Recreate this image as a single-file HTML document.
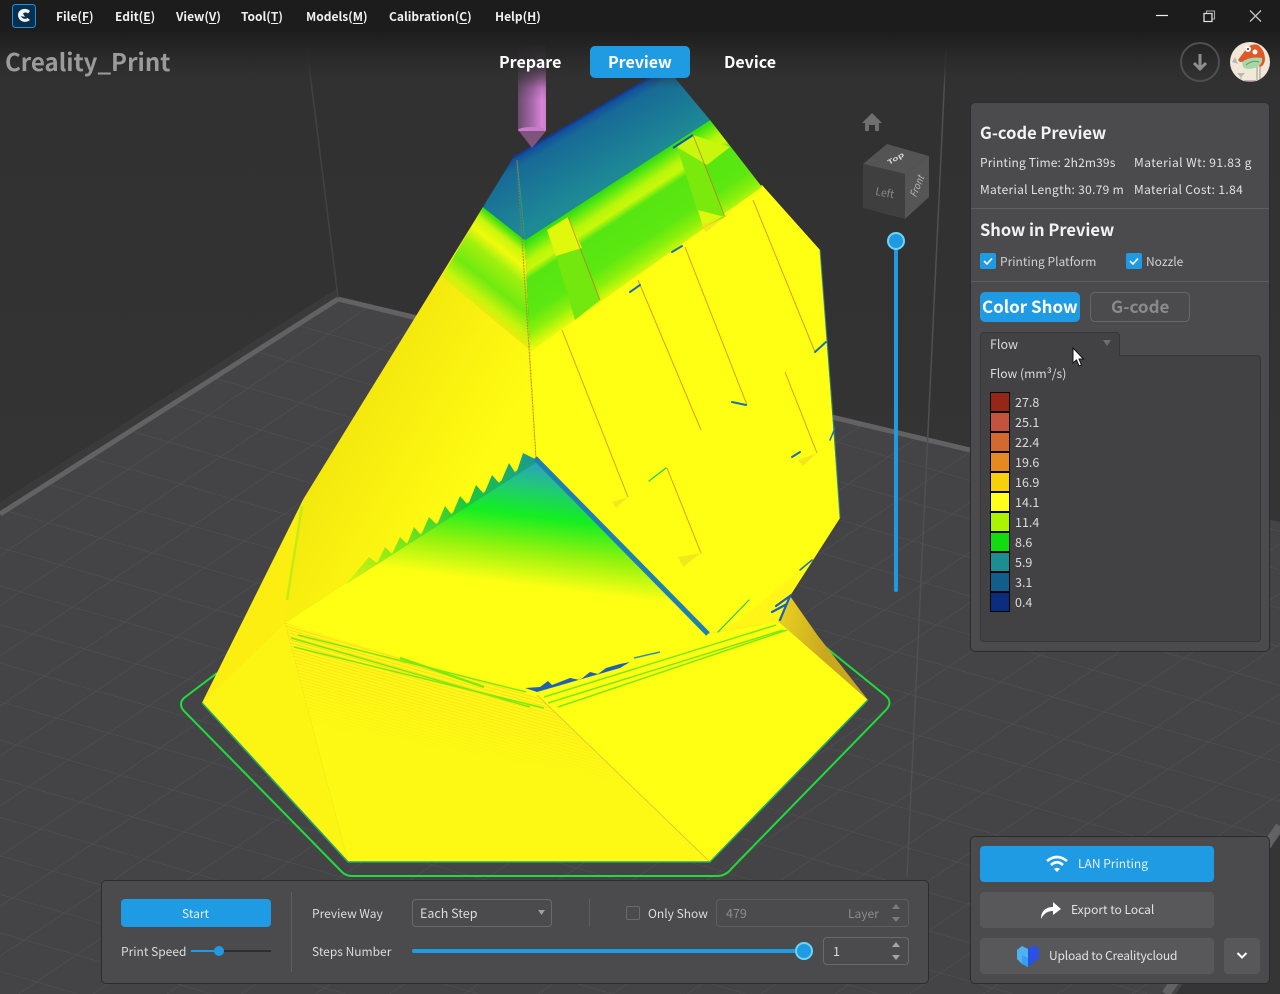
<!DOCTYPE html>
<html lang="en"><head><meta charset="utf-8"><title>Creality Print</title>
<style>
html,body{margin:0;padding:0;background:#444}
body{width:1280px;height:994px;position:relative;overflow:hidden;font-family:"Liberation Sans","Noto Sans CJK SC",sans-serif}
.t,.t *{font-family:"Noto Sans CJK SC","Liberation Sans",sans-serif}
.t{position:absolute;white-space:nowrap;color:#e2e2e2;font-size:12px;line-height:18px}
.b{position:absolute;box-sizing:border-box}
.m{font-size:12px;font-weight:700;color:#f0f0f0;top:8px}
.m u{text-underline-offset:2px;font-weight:700}
.h{font-size:16.5px;font-weight:700;color:#f2f2f2;line-height:22px}
.tb{font-size:16px;line-height:24px;font-weight:700;color:#fff;top:49px}
.sw{position:absolute;left:990px;width:20px;height:20px;box-sizing:border-box;border:1px solid #050505}
.l{left:1015px;color:#dcdcdc;font-size:12.5px}
svg{position:absolute}
</style></head><body>

<svg style="left:0;top:0" width="1280" height="994" viewBox="0 0 1280 994">
<defs>
<linearGradient id="wall" x1="0" y1="0" x2="0" y2="1"><stop offset="0" stop-color="#303030"/><stop offset="1" stop-color="#383838"/></linearGradient>
<pattern id="grid" patternUnits="userSpaceOnUse" width="100" height="100" patternTransform="matrix(.52 .15 .40 -.27 48 523)">
<path d="M0 0H100M0 0V100" stroke="#555557" stroke-width="2" fill="none"/></pattern>
<linearGradient id="top" x1="0" y1="0" x2="0" y2="1"><stop offset="0" stop-color="#1c1c1c"/><stop offset=".36" stop-color="#1d1d1d"/><stop offset=".75" stop-color="#2c2c2c" stop-opacity=".8"/><stop offset="1" stop-color="#333" stop-opacity="0"/></linearGradient>
<linearGradient id="noz" x1="0" y1="0" x2="1" y2="0"><stop offset="0" stop-color="#6a4a6c"/><stop offset=".5" stop-color="#a468a8"/><stop offset=".85" stop-color="#d884d8"/><stop offset="1" stop-color="#cf7dcf"/></linearGradient>
<linearGradient id="nozf" x1="0" y1="0" x2="0" y2="1"><stop offset="0" stop-color="#2c2c2c" stop-opacity=".8"/><stop offset="1" stop-color="#2c2c2c" stop-opacity="0"/></linearGradient>
<linearGradient id="roof" gradientUnits="userSpaceOnUse" x1="585" y1="115" x2="620" y2="175"><stop offset="0" stop-color="#12489c"/><stop offset=".16" stop-color="#176a96"/><stop offset="1" stop-color="#1e8a96"/></linearGradient>
<linearGradient id="band" gradientUnits="userSpaceOnUse" x1="615" y1="178" x2="668" y2="259"><stop offset="0" stop-color="#1cd418"/><stop offset=".1" stop-color="#58e810"/><stop offset=".22" stop-color="#b8f60a"/><stop offset=".3" stop-color="#c8f80a"/><stop offset=".38" stop-color="#56e612"/><stop offset=".7" stop-color="#5ce810"/><stop offset=".85" stop-color="#8cf00c"/><stop offset="1" stop-color="#e4fa0a"/></linearGradient>
<linearGradient id="band2" gradientUnits="userSpaceOnUse" x1="505" y1="225" x2="452" y2="292"><stop offset="0" stop-color="#30dc12"/><stop offset=".12" stop-color="#c8f60c"/><stop offset=".25" stop-color="#f0fb0c"/><stop offset=".4" stop-color="#a0f00e"/><stop offset=".65" stop-color="#70ea0f"/><stop offset=".85" stop-color="#c8f40c"/><stop offset="1" stop-color="#f4e80e"/></linearGradient>
<linearGradient id="tri" gradientUnits="userSpaceOnUse" x1="575" y1="470" x2="560" y2="590"><stop offset="0" stop-color="#2aa5b8"/><stop offset=".2" stop-color="#20cc70"/><stop offset=".42" stop-color="#14ee20"/><stop offset=".7" stop-color="#90f20e"/><stop offset="1" stop-color="#ffff14"/></linearGradient>
<linearGradient id="saw" gradientUnits="userSpaceOnUse" x1="535" y1="458" x2="340" y2="590"><stop offset="0" stop-color="#1a9a8e"/><stop offset=".35" stop-color="#1cc83c"/><stop offset=".7" stop-color="#84e818"/><stop offset="1" stop-color="#e4f410"/></linearGradient>
<linearGradient id="lft" gradientUnits="userSpaceOnUse" x1="330" y1="450" x2="450" y2="520"><stop offset="0" stop-color="#f4e80e"/><stop offset="1" stop-color="#fffb12"/></linearGradient>
<linearGradient id="gold" gradientUnits="userSpaceOnUse" x1="780" y1="620" x2="830" y2="630"><stop offset="0" stop-color="#e8cf20"/><stop offset="1" stop-color="#c9a820"/></linearGradient>
<pattern id="hatch" patternUnits="userSpaceOnUse" width="3" height="3" patternTransform="rotate(16)"><path d="M0 1H3" stroke="#f0773c" stroke-width="1" opacity=".22"/></pattern>
<linearGradient id="fade" gradientUnits="userSpaceOnUse" x1="420" y1="665" x2="405" y2="745"><stop offset="0" stop-color="#fff" stop-opacity="1"/><stop offset="1" stop-color="#fff" stop-opacity="0"/></linearGradient>
<mask id="fm" maskUnits="userSpaceOnUse" x="200" y="600" width="600" height="280"><rect x="200" y="600" width="600" height="280" fill="url(#fade)"/></mask>
</defs>

<!-- room -->
<rect width="1280" height="994" fill="url(#wall)"/>
<polygon points="338,298 1280,522 1280,994 0,994 0,513" fill="#444446"/>
<polygon points="338,298 1280,522 1280,994 0,994 0,513" fill="url(#grid)"/>
<polygon points="0,502 338,288 338,298 0,513" fill="#3a3a3a"/>
<path d="M0 514L338 299L970 450" stroke="#626262" stroke-width="5" fill="none"/>
<path d="M305 33L338 298" stroke="#424242" stroke-width="1.5" fill="none"/>
<path d="M946 50L907 877" stroke="#505052" stroke-width="1.5" fill="none"/>
<polygon points="1280,830 1280,994 1176,994" fill="#353535"/>
<path d="M1280 826L1166 994" stroke="#626262" stroke-width="9" fill="none"/>

<!-- skirt outline -->
<path d="M217 673L184 698Q178 704 184 711L342 872Q346 876 352 876L717 876Q726 876 732 868L886 710Q893 702 886 696L813 637" stroke="#1fdc3c" stroke-width="2" fill="none"/>

<!-- model base faces -->
<polygon points="202,703 304,498 483,207 530,350 536,458 285,623 348,862" fill="url(#lft)"/>
<polygon points="304,498 285,623 202,703" fill="#fbee10"/>
<polygon points="202,703 285,623 348,862" fill="#fcf412"/>
<path d="M302 506L287 600" stroke="#a4e818" stroke-width="2.5" opacity=".6" fill="none"/>
<polygon points="285,623 534,692 710,862 348,862" fill="#fdf814"/>
<polygon points="285,623 534,692 640,800 348,862" fill="url(#hatch)" mask="url(#fm)"/>
<polygon points="534,692 777,620 868,700 710,862" fill="#ffff14"/>
<path d="M534 692L710 862" stroke="#e7b33c" stroke-width="1" fill="none" opacity=".7"/>
<polygon points="790,596 777,620 868,700 818,636" fill="url(#gold)"/>
<path d="M202 703L348 862H710L868 700" stroke="#1fa66c" stroke-width="1.6" fill="none"/>

<!-- lower triangle -->
<polygon points="536,458 708,634 777,622 534,696 285,623" fill="#ffff14"/>
<polygon points="536,458 708,634 285,623" fill="url(#tri)"/>
<polygon points="537,460 523,453 516,474 509,463 500,484 492,475 484,494 476,485 468,505 460,496 452,515 445,506 437,525 429,517 421,535 414,527 407,544 400,537 392,554 385,547 377,563 369,557 345,585 537,462" fill="url(#saw)"/>

<!-- upper right face -->
<polygon points="530,350 762,185 820,250 840,518 790,596 777,622 708,634 536,458" fill="#ffff14"/>
<polygon points="708,634 777,622 790,596 800,570 740,620" fill="#fff218" opacity=".8"/>
<path d="M820 250L834 430L840 518" stroke="#2a8ea0" stroke-width="1.2" fill="none" opacity=".7"/>
<path d="M535 458L708 634" stroke="#1f7fb0" stroke-width="5" fill="none"/>

<!-- roof and bands -->
<polygon points="483,207 525,240 530,350 442,277" fill="url(#band2)"/>
<polygon points="525,240 710,120 762,187 530,352" fill="url(#band)"/>
<polygon points="513,158 650,78 675,78 710,120 525,240 483,207" fill="url(#roof)"/>
<path d="M513 158L650 78" stroke="#0e3f9c" stroke-width="2" fill="none"/>
<path d="M517 160L525 240" stroke="#1fa07e" stroke-width="1" fill="none"/>
<!-- pillars -->
<polygon points="677,147 693,135 725,217 703,228" fill="#7aea0c"/>
<polygon points="677,147 693,135 730,147 707,165" fill="#c8f60c"/>
<polygon points="698,210 725,217 730,212 703,228" fill="#dcf80c"/>
<path d="M673 148L693 135" stroke="#1656a8" stroke-width="2"/>
<polygon points="547,230 568,217 600,300 575,320 555,252" fill="#72e80e"/>
<polygon points="547,230 568,217 582,248 556,256" fill="#e0f80c"/>
<!-- red seams -->
<g stroke="#c8582c" stroke-width="1" fill="none" opacity=".6">
<path d="M693 135L725 217"/><path d="M568 217L600 300"/><path d="M753 200L815 352"/><path d="M685 247L747 405"/><path d="M638 280L701 430"/><path d="M562 330L628 497"/><path d="M667 468L701 553"/><path d="M785 372L817 453"/>
</g>
<path d="M517 160L536 458" stroke="#c86034" stroke-width="1" fill="none" stroke-dasharray="2 1" opacity=".8"/>
<g fill="#ecd81e" opacity=".6"><polygon points="628,497 612,502 616,508"/><polygon points="701,553 678,557 683,567"/><polygon points="817,453 798,460 803,466"/><polygon points="725,217 700,226 706,232"/></g>
<!-- small marks -->
<g fill="none" stroke-linecap="round">
<path d="M672 252L682 246M630 292L640 285M732 402L746 405M815 352L826 342M792 457L800 452" stroke="#1a6fb0" stroke-width="2"/>
<path d="M666 468L649 481M749 600L718 632" stroke="#20c860" stroke-width="1.2"/>
<path d="M776 606L790 596L780 620M772 612L787 604" stroke="#1c62b4" stroke-width="2.2"/>
<path d="M800 570L812 560M830 440L835 428" stroke="#1c72b4" stroke-width="1.5"/>
</g>
<!-- fold stripes -->
<g stroke="#7cea12" fill="none" stroke-width="1.5">
<path d="M298 635L526 692"/><path d="M291 638L530 707"/><path d="M294 647L544 708"/>
<path d="M400 658L484 687" stroke-width="2.5"/>
<path d="M544 697L776 625"/><path d="M548 703L783 630"/><path d="M558 707L787 630"/>
</g>
<polygon points="525,688 540,687 548,681 552,685 565,680 570,678 580,680 590,672 598,674 606,668 620,664 630,662 620,668 537,692" fill="#1f62b2"/>
<path d="M634 658L660 652" stroke="#2a90b0" stroke-width="1.5"/>

<!-- nozzle -->
<rect x="518" y="45" width="28" height="86" fill="url(#noz)"/>
<ellipse cx="532" cy="130" rx="14" ry="3" fill="#c97ac9"/>
<polygon points="519,131 546,131 532,148" fill="#7e547e"/>
<rect x="518" y="45" width="28" height="55" fill="url(#nozf)"/>

<!-- top fade -->
<rect width="1280" height="88" fill="url(#top)"/>
<rect width="1280" height="32" fill="#1c1c1c"/>

<!-- vertical slider -->
<rect x="894" y="241" width="4" height="351" rx="2" fill="#1f9ae0"/>
<circle cx="896" cy="241" r="8" fill="#1f9ae0" stroke="#6ed4f8" stroke-width="2"/>

<!-- home -->
<path d="M872 113L882 123H879V131H875V125H869V131H865V123H862Z" fill="#6f6f6f"/>
<!-- cube -->
<polygon points="863,164 887,144 929,156 905,174" fill="#545454"/>
<polygon points="863,164 905,174 905,219 863,208" fill="#3f3f3f"/>
<polygon points="905,174 929,156 929,197 905,219" fill="#555"/>
<text x="0" y="0" transform="translate(875,195) rotate(10) scale(.95,1)" font-size="11" fill="#8a8a8a" font-family="Noto Sans CJK SC,sans-serif">Left</text>
<text x="0" y="0" transform="translate(916,198) rotate(-68) scale(.9,1)" font-size="10" fill="#b4b4b4" font-style="italic" font-family="Noto Sans CJK SC,sans-serif">Front</text>
<text x="0" y="0" transform="translate(889,165) rotate(-30) scale(1,.65)" font-size="10" fill="#d4d4d4" font-weight="700" font-family="Noto Sans CJK SC,sans-serif">Top</text>
</svg>

<!-- title bar -->
<svg style="left:12px;top:4px" width="24" height="24" viewBox="0 0 24 24"><rect x=".5" y=".5" width="23" height="23" rx="3" fill="#07304f" stroke="#1d8fdc"/><path d="M18 7C14 3 6 5 6 11C6 17 13 20 18 16L15.5 14C12.5 16 9.5 14 9 12L13 13L11 9.5C13 8 15 8.5 16 9.5Z" fill="#f2f6f8"/></svg>
<span class="t m" style="left:56px">File(<u>F</u>)</span>
<span class="t m" style="left:115px">Edit(<u>E</u>)</span>
<span class="t m" style="left:176px">View(<u>V</u>)</span>
<span class="t m" style="left:241px">Tool(<u>T</u>)</span>
<span class="t m" style="left:306px">Models(<u>M</u>)</span>
<span class="t m" style="left:389px">Calibration(<u>C</u>)</span>
<span class="t m" style="left:495px">Help(<u>H</u>)</span>
<svg style="left:1150px;top:5px" width="120" height="22" viewBox="0 0 120 22">
<path d="M6 10.5H18" stroke="#eee" stroke-width="1.2"/>
<path d="M54 8.5H62V16.5H54Z" fill="none" stroke="#ddd" stroke-width="1.3"/><path d="M56.5 8V6H64.5V14H62.5" fill="none" stroke="#aaa" stroke-width="1.1"/>
<path d="M100 5.5L111 16.5M111 5.5L100 16.5" stroke="#c4c4c4" stroke-width="1.3"/></svg>

<span class="t" style="left:5px;top:42px;font-size:24px;line-height:38px;font-weight:700;color:#9b9b9b">Creality_Print</span>
<span class="t tb" style="left:499px">Prepare</span>
<div class="b" style="left:590px;top:46px;width:100px;height:32px;border-radius:5px;background:#1e9be2"></div>
<span class="t tb" style="left:608px">Preview</span>
<span class="t tb" style="left:724px">Device</span>

<svg style="left:1180px;top:42px" width="40" height="40" viewBox="0 0 40 40"><circle cx="20" cy="20" r="19" fill="none" stroke="#4f4f4f" stroke-width="2"/><path d="M20 12V26M14 21L20 27L26 21" fill="none" stroke="#8e8e8e" stroke-width="3"/></svg>
<svg style="left:1230px;top:42px" width="40" height="40" viewBox="0 0 40 40"><defs><clipPath id="av"><circle cx="20" cy="20" r="20"/></clipPath></defs><g clip-path="url(#av)"><rect width="40" height="40" fill="#f2e8d8"/><path d="M27 22V38M30 20V38" stroke="#b9b2a8" stroke-width="1.5"/><path d="M8 18L17 6Q22 1 28 3Q35 8 35 18Q34 24 30 25Q26 19 22 19L10 20Z" fill="#e0572a"/><circle cx="18" cy="7" r="3" fill="#fff"/><circle cx="25" cy="10" r="2.5" fill="#fff"/><circle cx="18" cy="7" r="1" fill="#333"/><path d="M12 20Q20 14 32 16Q33 22 27 25Q18 29 13 25Z" fill="#a9d6a6"/><path d="M16 23Q22 18 29 20" stroke="#5c9a6c" fill="none"/><path d="M7 31H15L11.5 35V38H10.5V35ZM2 20L5 15L8 22Z" fill="#b8b8b8"/><rect x="14" y="38.500" width="12" height="2" fill="#a374a8"/></g></svg>

<!-- right panel -->
<div class="b" style="left:970px;top:102px;width:300px;height:550px;background:#4b4b4d;border:1px solid #2c2c2e;border-radius:5px"></div>
<span class="t h" style="left:980px;top:121px">G-code Preview</span>
<span class="t" style="left:980px;top:154px;letter-spacing:.14px">Printing Time: 2h2m39s</span>
<span class="t" style="left:1134px;top:154px;letter-spacing:.45px">Material Wt: 91.83 g</span>
<span class="t" style="left:980px;top:181px;letter-spacing:.3px">Material Length: 30.79 m</span>
<span class="t" style="left:1134px;top:181px;letter-spacing:.35px">Material Cost: 1.84</span>
<div class="b" style="left:971px;top:208px;width:298px;height:1px;background:#5e5e60"></div>
<span class="t h" style="left:980px;top:218px">Show in Preview</span>
<svg style="left:980px;top:253px" width="16" height="16" viewBox="0 0 16 16"><rect width="16" height="16" rx="2" fill="#1e9be2"/><path d="M4 8L7 11L12 5.5" fill="none" stroke="#fff" stroke-width="1.6"/></svg>
<span class="t" style="left:1000px;top:253px;color:#d2d2d2">Printing Platform</span>
<svg style="left:1126px;top:253px" width="16" height="16" viewBox="0 0 16 16"><rect width="16" height="16" rx="2" fill="#1e9be2"/><path d="M4 8L7 11L12 5.5" fill="none" stroke="#fff" stroke-width="1.6"/></svg>
<span class="t" style="left:1146px;top:253px;color:#d2d2d2">Nozzle</span>
<div class="b" style="left:971px;top:281px;width:298px;height:1px;background:#5e5e60"></div>
<div class="b" style="left:980px;top:292px;width:100px;height:30px;background:#1e9be2;border-radius:5px"></div>
<span class="t" style="left:982px;top:294px;font-size:17px;line-height:24px;font-weight:700;color:#fff">Color Show</span>
<div class="b" style="left:1090px;top:292px;width:100px;height:30px;border:1px solid #66666a;border-radius:5px"></div>
<span class="t" style="left:1111px;top:294px;font-size:17px;line-height:24px;font-weight:700;color:#8a8a8e">G-code</span>

<div class="b" style="left:980px;top:355px;width:281px;height:287px;background:#424244;border:1px solid #363638;border-radius:0 4px 4px 4px"></div>
<div class="b" style="left:980px;top:332px;width:140px;height:24px;background:#424244;border:1px solid #363638;border-bottom:none;border-radius:4px 4px 0 0"></div>
<span class="t" style="left:990px;top:335px;color:#d8d8d8;font-size:12.5px">Flow</span>
<svg style="left:1102px;top:340px" width="10" height="7"><path d="M1 0H9L5 6Z" fill="#6e6e70"/></svg>
<span class="t" style="left:990px;top:364px;color:#dcdcdc;font-size:12.2px">Flow (mm³/s)</span>

<div class="sw" style="top:392px;background:#962716"></div><span class="t l" style="top:393px">27.8</span>
<div class="sw" style="top:412px;background:#c3533c"></div><span class="t l" style="top:413px">25.1</span>
<div class="sw" style="top:432px;background:#d2692f"></div><span class="t l" style="top:433px">22.4</span>
<div class="sw" style="top:452px;background:#e58a20"></div><span class="t l" style="top:453px">19.6</span>
<div class="sw" style="top:472px;background:#f6d008"></div><span class="t l" style="top:473px">16.9</span>
<div class="sw" style="top:492px;background:#ffff1c"></div><span class="t l" style="top:493px">14.1</span>
<div class="sw" style="top:512px;background:#aaf400"></div><span class="t l" style="top:513px">11.4</span>
<div class="sw" style="top:532px;background:#10dc10"></div><span class="t l" style="top:533px">8.6</span>
<div class="sw" style="top:552px;background:#1d8d94"></div><span class="t l" style="top:553px">5.9</span>
<div class="sw" style="top:572px;background:#135d8c"></div><span class="t l" style="top:573px">3.1</span>
<div class="sw" style="top:592px;background:#0c2d7e"></div><span class="t l" style="top:593px">0.4</span>

<!-- cursor -->
<svg style="left:1072px;top:347px" width="13" height="21" viewBox="0 0 13 21"><path d="M1 1V16L4.500 13L7 19L9.500 18L7 12H11.500Z" fill="#fff" stroke="#111" stroke-width="1"/></svg>

<!-- bottom right panel -->
<div class="b" style="left:970px;top:836px;width:300px;height:148px;background:#4b4b4d;border:1px solid #2c2c2e;border-radius:5px"></div>
<div class="b" style="left:980px;top:846px;width:234px;height:36px;background:#1e9be2;border-radius:4px"></div>
<svg style="left:1045px;top:855px" width="24" height="18" viewBox="0 0 24 18"><path d="M2 6Q12 -2 22 6" fill="none" stroke="#fff" stroke-width="2.6"/><path d="M6 10Q12 4.500 18 10" fill="none" stroke="#fff" stroke-width="2.6"/><path d="M9 14L12 17L15 14Q12 11.500 9 14Z" fill="#fff"/></svg>
<span class="t" style="left:1078px;top:855px;color:#e6f2fa">LAN Printing</span>
<div class="b" style="left:980px;top:892px;width:234px;height:36px;background:#58585b;border-radius:4px"></div>
<svg style="left:1040px;top:901px" width="22" height="18" viewBox="0 0 22 18"><path d="M1 18C1 10 6 6 13 6V1L21 8L13 14V10C8 10 4 12 1 18Z" fill="#fff"/></svg>
<span class="t" style="left:1071px;top:901px;color:#e2e2e2">Export to Local</span>
<div class="b" style="left:980px;top:938px;width:234px;height:36px;background:#58585b;border-radius:4px"></div>
<svg style="left:1016px;top:944px" width="24" height="24" viewBox="0 0 24 24"><path d="M1 6L6 2L12 5V23L6 20L1 15Z" fill="#4fb2f0"/><path d="M12 5L18 1L23 5V14L12 23Z" fill="#2a50e8"/><path d="M6 11L12 14V23L6 20Z" fill="#37a0ea"/></svg>
<span class="t" style="left:1049px;top:947px;color:#e2e2e2;letter-spacing:-.17px">Upload to Crealitycloud</span>
<div class="b" style="left:1224px;top:938px;width:36px;height:36px;background:#58585b;border-radius:4px"></div>
<svg style="left:1236px;top:951px" width="12" height="9" viewBox="0 0 12 9"><path d="M1.500 2L6 6.500L10.500 2" fill="none" stroke="#fff" stroke-width="2"/></svg>

<!-- bottom panel -->
<div class="b" style="left:101px;top:880px;width:828px;height:104px;background:#4b4b4d;border:1px solid #2c2c2e;border-radius:5px"></div>
<div class="b" style="left:121px;top:899px;width:150px;height:28px;background:#1e9be2;border-radius:4px"></div>
<span class="t" style="left:182px;top:905px;color:#e6f2fa">Start</span>
<span class="t" style="left:121px;top:943px;color:#dcdcdc">Print Speed</span>
<div class="b" style="left:191px;top:950px;width:80px;height:2px;background:#2e2e2e"></div>
<div class="b" style="left:191px;top:950px;width:28px;height:2px;background:#1e9be2"></div>
<div class="b" style="left:214px;top:946px;width:10px;height:10px;border-radius:50%;background:#1e9be2"></div>
<div class="b" style="left:291px;top:892px;width:1px;height:80px;background:#5e5e60"></div>
<span class="t" style="left:312px;top:905px;color:#dcdcdc">Preview Way</span>
<div class="b" style="left:412px;top:899px;width:140px;height:28px;border:1px solid #6a6a6c;border-radius:4px"></div>
<span class="t" style="left:420px;top:904px;color:#dcdcdc;font-size:12.5px">Each Step</span>
<svg style="left:537px;top:909px" width="9" height="7"><path d="M1 1H8L4.500 6Z" fill="#a0a0a0"/></svg>
<div class="b" style="left:589px;top:899px;width:1px;height:28px;background:#5e5e60"></div>
<div class="b" style="left:626px;top:906px;width:14px;height:14px;border:1px solid #6a6a6c;border-radius:2px"></div>
<span class="t" style="left:648px;top:905px;color:#dcdcdc">Only Show</span>
<div class="b" style="left:716px;top:899px;width:193px;height:28px;border:1px solid #5e5e60;border-radius:4px"></div>
<span class="t" style="left:726px;top:904px;color:#8c8c8c;font-size:12.5px">479</span>
<span class="t" style="left:848px;top:905px;color:#8c8c8c">Layer</span>
<svg style="left:891px;top:903px" width="10" height="20" viewBox="0 0 10 20"><path d="M1 6L5 1L9 6ZM1 14H9L5 19Z" fill="#7a7a7c"/></svg>
<span class="t" style="left:312px;top:943px;color:#dcdcdc">Steps Number</span>
<div class="b" style="left:412px;top:949px;width:392px;height:4px;border-radius:2px;background:#1e9be2"></div>
<div class="b" style="left:795px;top:942px;width:18px;height:18px;border-radius:50%;background:#1e9be2;border:2px solid #6ed4f8"></div>
<div class="b" style="left:823px;top:937px;width:86px;height:28px;border:1px solid #6a6a6c;border-radius:4px"></div>
<span class="t" style="left:833px;top:942px;color:#dcdcdc;font-size:12.5px">1</span>
<svg style="left:891px;top:941px" width="10" height="20" viewBox="0 0 10 20"><path d="M1 6L5 1L9 6ZM1 14H9L5 19Z" fill="#a4a4a6"/></svg>

</body></html>
